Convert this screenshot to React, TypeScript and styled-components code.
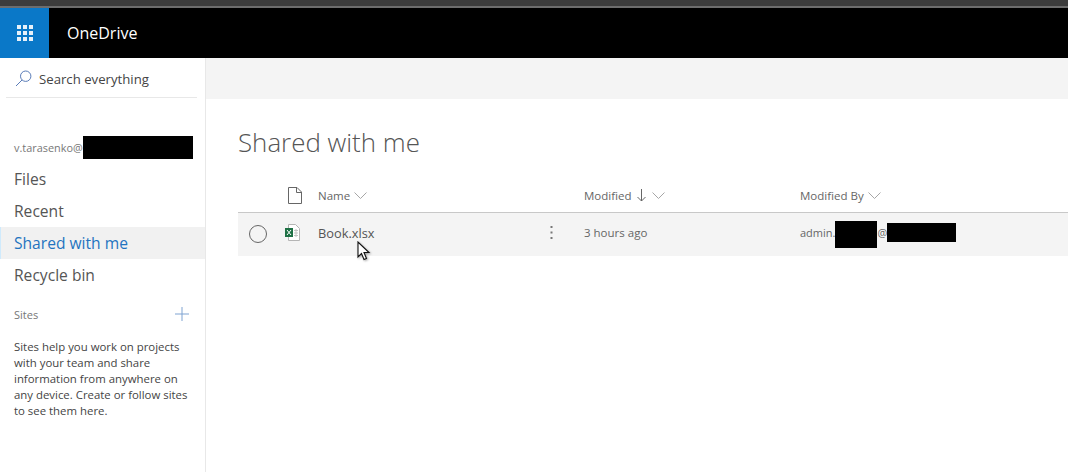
import React from 'react';
import styled, { createGlobalStyle } from 'styled-components';

const GlobalStyle = createGlobalStyle`
  html, body {
    margin: 0;
    height: 100%;
    overflow: hidden;
    background: #fff;
  }
  #root {
    height: 100%;
  }
`;

const Page = styled.div`
  color: #333;
  display: flex;
  flex-direction: column;
  font-family: 'Open Sans', 'Liberation Sans', sans-serif;
  height: 472px;
  width: 1068px;
`;

const BrowserStrip = styled.div`
  background: linear-gradient(#3c3c3c 0, #3c3c3c 6px, #6d6d6d 6px, #6d6d6d 8px);
  flex: none;
  height: 8px;
`;

const TopBar = styled.header`
  align-items: center;
  background: #000;
  display: flex;
  flex: none;
  height: 50px;
`;

const WaffleButton = styled.div`
  align-items: center;
  background: #0a78c8;
  display: flex;
  height: 100%;
  justify-content: center;
  width: 49px;
`;

const Brand = styled.div`
  color: #fff;
  font-size: 16px;
  margin-left: 18px;
`;

const Body = styled.div`
  display: flex;
  flex: 1;
  min-height: 0;
`;

const Sidebar = styled.nav`
  border-right: 1px solid #e8e8e8;
  box-sizing: border-box;
  flex: none;
  width: 206px;
`;

const SearchRow = styled.div`
  align-items: center;
  border-bottom: 1px solid #e8e8e8;
  color: #444;
  display: flex;
  font-size: 13.2px;
  gap: 7px;
  height: 37px;
  margin: 0 8px 0 6px;
  padding: 2px 0 0 9px;
`;

const Account = styled.div`
  align-items: center;
  color: #777;
  display: flex;
  font-size: 10.9px;
  height: 24px;
  margin-top: 37px;
  padding-left: 14px;
`;

const Redaction = styled.span<{ $w: number; $h: number; $shift?: number }>`
  background: #000;
  display: inline-block;
  flex: none;
  height: ${(p) => p.$h}px;
  transform: translateY(${(p) => p.$shift ?? 0}px);
  width: ${(p) => p.$w}px;
`;

const NavList = styled.ul`
  list-style: none;
  margin: 4px 0 0;
  padding: 0;
`;

const NavItem = styled.li<{ $active?: boolean }>`
  align-items: center;
  background: ${(p) => (p.$active ? '#f1f1f1' : 'transparent')};
  box-shadow: ${(p) => (p.$active ? 'inset 1px 0 #cfeafc' : 'none')};
  color: ${(p) => (p.$active ? '#1f74c0' : '#555')};
  display: flex;
  font-size: 15.6px;
  height: 32px;
  padding-left: 14px;
`;

const SitesHeader = styled.div`
  align-items: center;
  color: #777;
  display: flex;
  font-size: 11px;
  height: 24px;
  justify-content: space-between;
  margin-top: 11px;
  padding: 0 16px 0 14px;
`;

const SitesHelp = styled.p`
  color: #444;
  font-size: 11.4px;
  line-height: 16px;
  margin: 13px 0 0;
  padding: 0 14px;
`;

const Main = styled.main`
  display: flex;
  flex: 1;
  flex-direction: column;
  min-width: 0;
`;

const CommandBar = styled.div`
  background: #f4f4f4;
  flex: none;
  height: 41px;
`;

const Content = styled.div`
  padding: 0 0 0 32px;
`;

const Title = styled.h1`
  color: #555;
  font-size: 25.9px;
  font-weight: 300;
  line-height: 36px;
  margin: 25px 0 0;
`;

const HeaderRow = styled.div`
  align-items: center;
  border-bottom: 1px solid #c8c8c8;
  box-sizing: border-box;
  color: #666;
  display: grid;
  font-size: 11.5px;
  grid-template-columns: 40px 40px 266px 216px 1fr;
  height: 36px;
  margin-top: 17px;
  padding-top: 1px;
`;

const FileRow = styled.div`
  align-items: center;
  background: #f4f4f4;
  box-sizing: border-box;
  color: #666;
  display: grid;
  font-size: 11.5px;
  grid-template-columns: 40px 40px 266px 216px 1fr;
  height: 43px;
  padding-bottom: 4px;
`;

const Cell = styled.div<{ $gap?: number }>`
  align-items: center;
  display: flex;
  gap: ${(p) => p.$gap ?? 4}px;
`;

const OwnerCell = styled.div`
  align-items: center;
  display: flex;
  font-size: 11px;
`;

const IconCell = styled.div<{ $inset: number }>`
  align-items: center;
  display: flex;
  justify-content: center;
  padding-right: ${(p) => p.$inset}px;
`;

const RadioCell = styled.div`
  align-items: center;
  display: flex;
  justify-content: center;
  padding-top: 2px;
`;

const NameCell = styled.div`
  align-items: center;
  color: #555;
  display: flex;
  font-size: 12.8px;
  justify-content: space-between;
  padding-right: 31px;
`;

const RowRadio = styled.span`
  border: 1.5px solid #666;
  border-radius: 50%;
  box-sizing: border-box;
  height: 18px;
  width: 18px;
`;

const Cursor = styled.svg`
  filter: drop-shadow(1px 1px 1px rgba(0, 0, 0, 0.35));
  left: 357px;
  position: absolute;
  top: 241px;
`;

const Chevron = () => (
  <svg width="13" height="7" viewBox="0 0 13 7" fill="none" stroke="#a6a6a6" strokeWidth="1">
    <path d="M.5.5l6 6 6-6" />
  </svg>
);

const Waffle = () => (
  <svg width="16" height="16" viewBox="0 0 16 16" fill="#fff" opacity="0.9">
    {[0, 6, 12].flatMap((y) =>
      [0, 6, 12].map((x) => <rect key={`${x}-${y}`} x={x} y={y} width="4" height="4" />)
    )}
  </svg>
);

const App: React.FC = () => {
  return (
    <Page>
      <GlobalStyle />
      <BrowserStrip />
      <TopBar>
        <WaffleButton>
          <Waffle />
        </WaffleButton>
        <Brand>OneDrive</Brand>
      </TopBar>
      <Body>
        <Sidebar>
          <SearchRow>
            <svg width="17" height="17" viewBox="0 0 17 17" fill="none" stroke="#5a7cb8" strokeWidth="1">
              <circle cx="10.7" cy="6.2" r="5.2" />
              <path d="M7 10L1 16" />
            </svg>
            Search everything
          </SearchRow>
          <Account>
            v.tarasenko@
            <Redaction $w={110} $h={23} />
          </Account>
          <NavList>
            <NavItem>Files</NavItem>
            <NavItem>Recent</NavItem>
            <NavItem $active>Shared with me</NavItem>
            <NavItem>Recycle bin</NavItem>
          </NavList>
          <SitesHeader>
            Sites
            <svg width="14" height="14" viewBox="0 0 14 14" stroke="#7fa3d1" strokeWidth="1">
              <path d="M7 0v14M0 7h14" />
            </svg>
          </SitesHeader>
          <SitesHelp>
            Sites help you work on projects with your team and share information from anywhere on any
            device. Create or follow sites to see them here.
          </SitesHelp>
        </Sidebar>
        <Main>
          <CommandBar />
          <Content>
            <Title>Shared with me</Title>
            <HeaderRow>
              <div />
              <IconCell $inset={7}>
                <svg width="14" height="17" viewBox="0 0 14 17" fill="none" stroke="#666" strokeWidth="1">
                  <path d="M.5.5h8.5l4.5 4.5v11.5h-13zM8.5.5v5h5" />
                </svg>
              </IconCell>
              <Cell>
                Name <Chevron />
              </Cell>
              <Cell $gap={6}>
                Modified
                <svg width="9" height="13" viewBox="0 0 9 13" fill="none" stroke="#666" strokeWidth="1">
                  <path d="M4.5 0v12M.5 8l4 4 4-4" />
                </svg>
                <Chevron />
              </Cell>
              <Cell>
                Modified By <Chevron />
              </Cell>
            </HeaderRow>
            <FileRow>
              <RadioCell>
                <RowRadio />
              </RadioCell>
              <IconCell $inset={11}>
                <svg width="15" height="17" viewBox="0 0 15 17">
                  <path d="M3.5.5h7l4 4v12h-11z" fill="#fff" stroke="#b5b5b5" />
                  <path d="M9 6.5h4M9 9h4M9 11.500h4M11 5v8" stroke="#c4c4c4" fill="none" />
                  <rect x="0" y="4" width="8" height="9" fill="#1e7145" />
                  <path d="M2 6l4 5M6 6l-4 5" stroke="#fff" />
                </svg>
              </IconCell>
              <NameCell>
                Book.xlsx
                <svg width="3" height="13" viewBox="0 0 3 13" fill="#777">
                  <rect x="0.5" y="0" width="2" height="2" />
                  <rect x="0.5" y="5.5" width="2" height="2" />
                  <rect x="0.5" y="11" width="2" height="2" />
                </svg>
              </NameCell>
              <div>3 hours ago</div>
              <OwnerCell>
                admin.
                <Redaction $w={42} $h={27} $shift={2} />
                @
                <Redaction $w={69} $h={19} />
              </OwnerCell>
            </FileRow>
          </Content>
        </Main>
      </Body>
      <Cursor width="15" height="21" viewBox="0 0 15 21">
        <path d="M1 1v15l3.5-3.5 2.5 6 2.5-1-2.5-6h5z" fill="#fff" stroke="#111" strokeWidth="1.1" />
      </Cursor>
    </Page>
  );
};

export default App;
